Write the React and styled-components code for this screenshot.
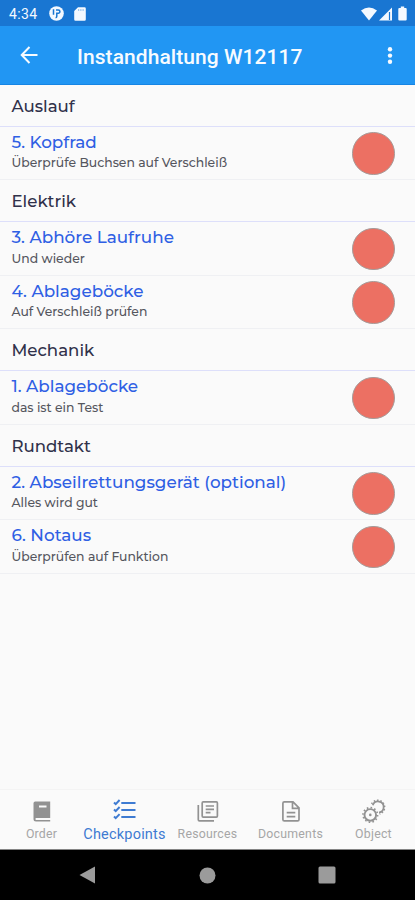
import React from "react";
import styled, { createGlobalStyle } from "styled-components";

const GlobalStyle = createGlobalStyle`
  * { box-sizing: border-box; }
  html, body { margin: 0; padding: 0; background: #fafafa; }
  body { overflow: hidden; }
  svg { display: block; flex: none; }
`;

const Screen = styled.div`
  width: 415px;
  height: 900px;
  display: flex;
  flex-direction: column;
  background: #fafafa;
  font-family: Roboto, sans-serif;
`;

const StatusBar = styled.header`
  height: 26px;
  flex: none;
  display: flex;
  align-items: center;
  padding: 1px 5px 0 9px;
  background: #1976d2;
  color: #f4f9ff;
`;

const Clock = styled.span`
  width: 40px;
  font-size: 14px;
  line-height: 16px;
  letter-spacing: 0.4px;
`;

const StatusGroup = styled.div`
  display: flex;
  align-items: center;
  gap: ${(p) => p.$gap}px;
  margin-left: ${(p) => (p.$end ? "auto" : 0)};
`;

const AppBar = styled.div`
  height: 58.5px;
  flex: none;
  display: flex;
  align-items: center;
  padding: 1px 13px 0 17px;
  background: #2196f3;
  border-bottom: 1px solid #1685e4;
  color: #f7fbff;
`;

const IconButton = styled.button`
  width: 24px;
  height: 24px;
  display: grid;
  place-items: center;
  padding: 0;
  border: 0;
  background: none;
  color: inherit;
`;

const Title = styled.h1`
  flex: 1;
  margin: 3px 0 0 36px;
  font-size: 21px;
  line-height: 28px;
  font-weight: 500;
  letter-spacing: 0.06px;
  white-space: nowrap;
`;

const List = styled.main`
  flex: 1;
  font-family: Montserrat, Inter, sans-serif;
  font-weight: 500;
`;

const SectionHeading = styled.h2`
  height: 42px;
  margin: 0;
  padding: 1px 0 0 11.5px;
  border-bottom: 1px solid #dddffa;
  font-size: 16.600px;
  line-height: 41px;
  font-weight: 500;
  color: #30314a;
`;

const Row = styled.div`
  height: 53.5px;
  display: flex;
  align-items: center;
  justify-content: space-between;
  padding: 0 20.5px 0 11.5px;
  border-bottom: 1px solid #eff0f3;
`;

const RowText = styled.div`
  display: flex;
  flex-direction: column;
  white-space: nowrap;
`;

const RowTitle = styled.span`
  font-size: 16.8px;
  line-height: 21.5px;
  color: #2f5fe4;
`;

const RowNote = styled.span`
  font-size: 12.4px;
  line-height: 20.5px;
  color: #55565e;
`;

const StatusDot = styled.span`
  width: 42.5px;
  height: 42.5px;
  flex: none;
  margin-top: 1px;
  border: 1px solid #a69b99;
  border-radius: 50%;
  background: #ec7063;
`;

const TabBar = styled.nav`
  height: 61px;
  flex: none;
  display: grid;
  grid-template-columns: repeat(5, 1fr);
  background: #fafafa;
  border-top: 1px solid #f4f4f4;
  border-bottom: 1px solid #858585;
`;

const Tab = styled.div`
  display: flex;
  flex-direction: column;
  align-items: center;
  padding-top: 7px;
`;

const TabIcon = styled.span`
  height: 28px;
  display: grid;
  place-items: center;
  color: ${(p) => (p.$active ? "#3e7bd2" : "#929292")};
`;

const TabLabel = styled.span`
  margin-top: 1px;
  font-size: ${(p) => (p.$active ? 14.5 : 12.3)}px;
  line-height: 17px;
  letter-spacing: ${(p) => p.$spacing}px;
  color: ${(p) => (p.$active ? "#3e7bd2" : "#a6a6a6")};
`;

const SystemNav = styled.footer`
  height: 50px;
  flex: none;
  display: flex;
  align-items: center;
  justify-content: space-between;
  padding: 0 79px 0 78px;
  background: #000;
  color: #9b9b9b;
`;

const BookIcon = () => (
  <svg width="24" height="24" viewBox="0 0 24 24" fill="currentColor">
    <path d="M5.200 2.500h15v16.600H6.300a.9.9 0 0 0 0 1.800h13.900v1.600H6a2.500 2.500 0 0 1-2.500-2.500V4.200A1.700 1.700 0 0 1 5.200 2.500zM9 6.500v2h7.500v-2z" fillRule="evenodd" />
  </svg>
);

const ChecklistIcon = () => (
  <svg width="26" height="26" viewBox="0 0 26 26" fill="none" stroke="currentColor" strokeWidth="2">
    <path d="M9.300 5H23.500M9.300 12H23.500M9.300 19.100H23.500" />
    <path d="M2 4.500l1.700 1.600L7.600 2M2 11.500l1.700 1.600 3.900-4.100M2 18.600l1.700 1.600 3.900-4.100" strokeWidth="2" />
  </svg>
);

const ResourcesIcon = () => (
  <svg width="24" height="24" viewBox="0 0 24 24" fill="none" stroke="currentColor" strokeWidth="1.700">
    <rect x="6.200" y="2.900" width="15.200" height="15.200" rx="1" />
    <path d="M2.300 6V20.700Q2.300 21.900 3.500 21.900H18M9.700 7H18M9.700 10.300H18M9.700 13.600H14.500" />
  </svg>
);

const DocumentIcon = () => (
  <svg width="24" height="24" viewBox="0 0 24 24" fill="none" stroke="currentColor" strokeWidth="1.700">
    <path d="M5.300 2.800h8.700l6 6v11.700a1.400 1.400 0 0 1-1.400 1.400H5.300a1.400 1.400 0 0 1-1.400-1.400V4.200a1.400 1.400 0 0 1 1.400-1.400zM13.500 2.800v6.500H20M7.700 13.600h8.600M7.700 17.600h8.600" />
  </svg>
);

const GearsIcon = () => (
  <svg width="26" height="26" viewBox="0 0 26 26" fill="none" stroke="currentColor">
    <path d="M11.800 7.200A5.600 5.600 0 1 1 18 14.600" strokeWidth="1.800" />
    <path d="M10.600 5.800A7 7 0 1 1 18.600 16" strokeWidth="1.500" strokeDasharray="1.500 1.800" />
    <circle cx="9.300" cy="16.900" r="5.800" strokeWidth="1.900" />
    <circle cx="9.300" cy="16.900" r="7.300" strokeWidth="1.600" strokeDasharray="1.600 2.223" />
    <circle cx="9.300" cy="16.900" r="1.300" fill="currentColor" stroke="none" />
  </svg>
);

const sections = [
  { name: "Auslauf", items: [
    { title: "5. Kopfrad", note: "Überprüfe Buchsen auf Verschleiß" },
  ] },
  { name: "Elektrik", items: [
    { title: "3. Abhöre Laufruhe", note: "Und wieder" },
    { title: "4. Ablageböcke", note: "Auf Verschleiß prüfen" },
  ] },
  { name: "Mechanik", items: [
    { title: "1. Ablageböcke", note: "das ist ein Test" },
  ] },
  { name: "Rundtakt", items: [
    { title: "2. Abseilrettungsgerät (optional)", note: "Alles wird gut" },
    { title: "6. Notaus", note: "Überprüfen auf Funktion" },
  ] },
];

const tabs = [
  { label: "Order", icon: BookIcon, spacing: 0.2 },
  { label: "Checkpoints", icon: ChecklistIcon, active: true, spacing: 0.2 },
  { label: "Resources", icon: ResourcesIcon, spacing: 0.25 },
  { label: "Documents", icon: DocumentIcon, spacing: 0.25 },
  { label: "Object", icon: GearsIcon, spacing: 0.25 },
];

export default function App() {
  return (
    <Screen>
      <GlobalStyle />
      <StatusBar>
        <Clock>4:34</Clock>
        <StatusGroup $gap={10}>
          <svg width="15" height="15" viewBox="0 0 15 15">
            <circle cx="7.500" cy="7.500" r="7.300" fill="currentColor" />
            <path d="M4.500 3.200v5.600M7 4h2.300a1.600 1.600 0 0 1 0 3.200H7.800v3a1.500 1.500 0 0 1-1.200 1.500" fill="none" stroke="#1976d2" strokeWidth="1.500" />
          </svg>
          <svg width="12" height="14" viewBox="0 0 12 14" fill="currentColor">
            <path d="M4 .3h6.500a1.300 1.300 0 0 1 1.300 1.300v10.800a1.300 1.300 0 0 1-1.300 1.300h-9A1.300 1.300 0 0 1 .2 12.400V4z" />
            <path d="M4.700 2v2M6.900 2v2M9.100 2v2" stroke="#85b5e6" strokeWidth=".9" />
          </svg>
        </StatusGroup>
        <StatusGroup $gap={2} $end>
          <svg width="16" height="14" viewBox="0 0 16 14" fill="currentColor">
            <path d="M0 3.500Q8-2.500 16 3.500L8 13.500z" />
          </svg>
          <svg width="14" height="14" viewBox="0 0 14 14" fill="currentColor">
            <path d="M0 13.500L13 .5v13z" />
            <path d="M10.500 5v8" stroke="#1976d2" strokeWidth="1.200" />
          </svg>
          <svg width="15" height="15" viewBox="0 0 15 15" fill="currentColor">
            <path d="M4.300 2h1.500V.5h3.400V2h1.500a1 1 0 0 1 1 1v10.500a1 1 0 0 1-1 1H4.300a1 1 0 0 1-1-1V3a1 1 0 0 1 1-1z" />
          </svg>
        </StatusGroup>
      </StatusBar>
      <AppBar>
        <IconButton aria-label="Back">
          <svg width="24" height="24" viewBox="0 0 24 24" fill="none" stroke="currentColor" strokeWidth="2">
            <path d="M20.500 12H5M12.500 4L4.700 12l7.800 8" />
          </svg>
        </IconButton>
        <Title>Instandhaltung W12117</Title>
        <IconButton aria-label="More">
          <svg width="24" height="24" viewBox="0 0 24 24" fill="currentColor">
            <circle cx="12" cy="6.300" r="2.200" />
            <circle cx="12" cy="12.600" r="2.200" />
            <circle cx="12" cy="18.800" r="2.200" />
          </svg>
        </IconButton>
      </AppBar>
      <List>
        {sections.map((s) => (
          <section key={s.name}>
            <SectionHeading>{s.name}</SectionHeading>
            {s.items.map((i) => (
              <Row key={i.title}>
                <RowText>
                  <RowTitle>{i.title}</RowTitle>
                  <RowNote>{i.note}</RowNote>
                </RowText>
                <StatusDot />
              </Row>
            ))}
          </section>
        ))}
      </List>
      <TabBar>
        {tabs.map(({ label, icon: Icon, active, spacing }) => (
          <Tab key={label}>
            <TabIcon $active={active}><Icon /></TabIcon>
            <TabLabel $active={active} $spacing={spacing}>{label}</TabLabel>
          </Tab>
        ))}
      </TabBar>
      <SystemNav>
        <svg width="18" height="18" viewBox="0 0 18 18" fill="currentColor"><path d="M17 .5v17L1.500 9z" /></svg>
        <svg width="17" height="17" viewBox="0 0 17 17" fill="currentColor"><circle cx="8.500" cy="8.500" r="8" /></svg>
        <svg width="18" height="18" viewBox="0 0 18 18" fill="currentColor"><rect x=".5" y=".5" width="17" height="17" rx="1.500" /></svg>
      </SystemNav>
    </Screen>
  );
}
